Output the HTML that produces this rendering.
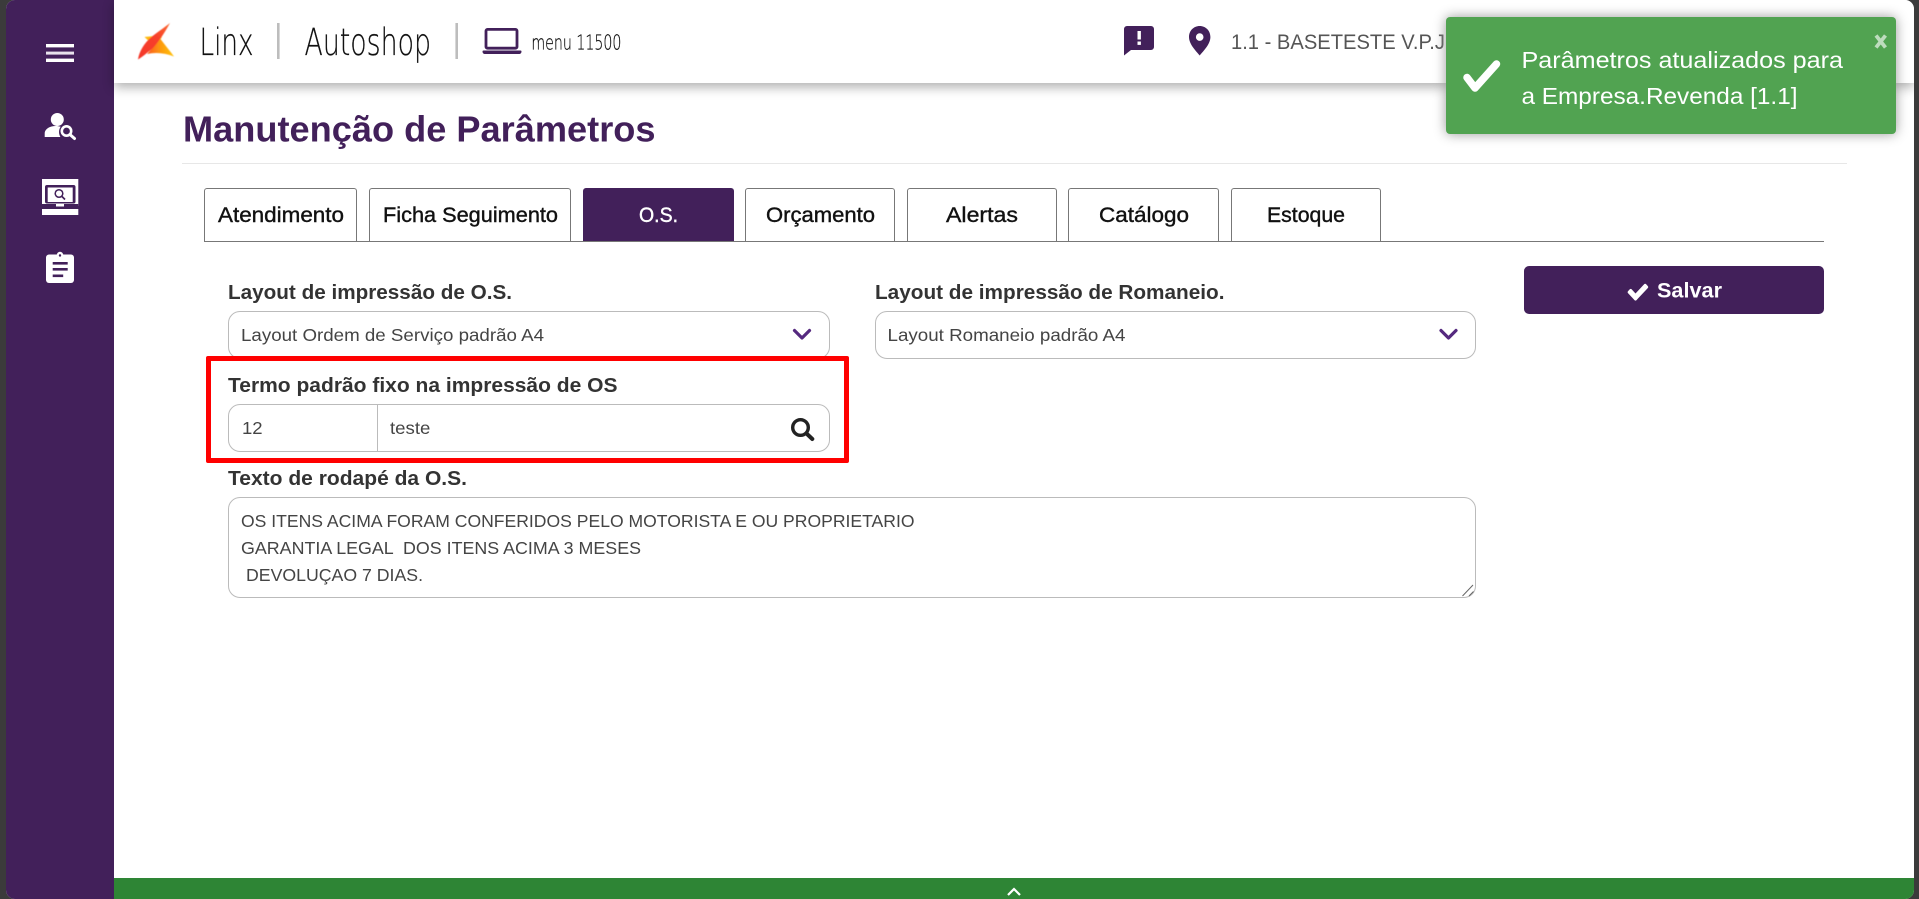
<!DOCTYPE html>
<html lang="pt-BR"><head><meta charset="utf-8"><title>Manutenção de Parâmetros</title>
<style>
html,body{margin:0;padding:0;width:1919px;height:899px;overflow:hidden;background:#3b3b3b;font-family:"Liberation Sans",sans-serif}
div{position:absolute;box-sizing:border-box}
#app{left:6px;top:0;width:1908px;height:899px;background:#fff;border-radius:9px;overflow:hidden}
#side{left:0;top:0;width:108px;height:899px;background:#42205a}
#head{left:108px;top:0;width:1800px;height:83px;background:#fff;box-shadow:0 4px 11px rgba(0,0,0,.32)}
#foot{left:108px;top:878px;width:1800px;height:21px;background:#2e8535}
.hr{left:176px;top:163px;width:1665px;height:1px;background:#e7e7e7}
.tab{top:188px;height:53px;background:#fff;border:1px solid #777;border-bottom:0;border-radius:3px 3px 0 0}
.tab.on{background:#42205a;border-color:#42205a}
.line{left:198px;top:241px;width:1620px;height:1px;background:#777}
.box{background:#fff;border:1px solid #bbb;border-radius:12px}
.btn{left:1518px;top:266px;width:300px;height:48px;background:#42205a;border-radius:5px}
.red{left:200px;top:356px;width:643px;height:107px;border:5px solid #f00;border-radius:2px}
.div{left:371px;top:405px;width:1px;height:47px;background:#bbb}
#toast{left:1446px;top:17px;width:450px;height:117px;background:#51a351;border-radius:4px;box-shadow:0 0 12px #999}
svg{position:absolute;left:0;top:0}
text{font-family:"Liberation Sans",sans-serif}
.lb{font-size:20.500px;font-weight:700;fill:#333}
.tb{font-size:21.500px;fill:#111;stroke:#111;stroke-width:.4px}
.in{font-size:17.500px;fill:#444}
.th{font-family:"DejaVu Sans ExtraLight","DejaVu Sans","Liberation Sans",sans-serif;fill:#111;font-weight:200;stroke:#111;stroke-width:.25px}
</style></head>
<body>
<div id="app">
  <div id="side"></div>
  <div id="foot"></div>
  <div id="head"></div>
  <div class="hr"></div>
  <div class="tab" style="left:198px;width:153px"></div>
  <div class="tab" style="left:363px;width:202px"></div>
  <div class="tab on" style="left:577px;width:151px"></div>
  <div class="tab" style="left:739px;width:150px"></div>
  <div class="tab" style="left:901px;width:150px"></div>
  <div class="tab" style="left:1062px;width:151px"></div>
  <div class="tab" style="left:1225px;width:150px"></div>
  <div class="line"></div>
  <div class="box" style="left:222px;top:311px;width:602px;height:48px"></div>
  <div class="box" style="left:869px;top:311px;width:600.500px;height:48px"></div>
  <div class="box" style="left:222px;top:404px;width:602px;height:48px"></div>
  <div class="div"></div>
  <div class="box" style="left:222px;top:497px;width:1247.500px;height:101px"></div>
  <div class="btn"></div>
  <div class="red"></div>
</div>

<svg width="1919" height="899" viewBox="0 0 1919 899" xmlns="http://www.w3.org/2000/svg">
  <defs>
    <linearGradient id="lg" x1="0" y1="1" x2="1" y2="0">
      <stop offset="0" stop-color="#f4372c"/><stop offset=".6" stop-color="#f8402a"/><stop offset="1" stop-color="#fb6a30"/>
    </linearGradient>
    <linearGradient id="lg2" x1="0" y1="0" x2="1" y2="0">
      <stop offset="0" stop-color="#fb5a1e"/><stop offset=".5" stop-color="#fd9a10"/><stop offset="1" stop-color="#ffc40a"/>
    </linearGradient>
    <filter id="sb" x="-10%" y="-10%" width="120%" height="120%"><feGaussianBlur stdDeviation=".45"/></filter>
  </defs>

  <!-- sidebar icons -->
  <g fill="#fff">
    <rect x="46" y="44" width="28" height="3.400"/><rect x="46" y="51.600" width="28" height="3" fill="#e8e2ec"/><rect x="46" y="58.600" width="28" height="3.400"/>
    <circle cx="57.300" cy="119.500" r="6.500"/>
    <path d="M44.700 137v-3.500c0-4.500 5-7.500 11-7.500 2 0 3.500.3 5 .8-1.800 2.200-2.500 6.500-.3 10.200z"/>
  </g>
  <circle cx="66.500" cy="131" r="4.700" fill="#42205a" stroke="#fff" stroke-width="2.600"/>
  <path d="M70.500 135l4 3.500" stroke="#fff" stroke-width="3" stroke-linecap="round"/>

  <rect x="42" y="179" width="36.300" height="27" fill="#fff"/>
  <rect x="45" y="185" width="30.500" height="18.500" rx="2" fill="#42205a"/>
  <rect x="47.700" y="187.500" width="25" height="14.500" fill="#fff"/>
  <rect x="42" y="204" width="36.300" height="2.500" fill="#42205a"/>
  <rect x="56" y="203.500" width="8" height="3" fill="#fff"/>
  <rect x="42" y="209" width="36.300" height="6" fill="#fff"/>
  <circle cx="59" cy="193.500" r="3.800" fill="none" stroke="#42205a" stroke-width="1.500"/>
  <path d="M62 196.500l3 3" stroke="#42205a" stroke-width="1.700"/>

  <rect x="46" y="254.500" width="28" height="28.500" rx="3" fill="#fff"/>
  <circle cx="60" cy="255" r="3.200" fill="#fff"/><circle cx="60" cy="255.500" r="1.200" fill="#42205a"/>
  <g fill="#42205a"><rect x="52.700" y="262" width="15" height="2.600"/><rect x="52.700" y="268" width="15" height="2.600"/><rect x="52.700" y="274.500" width="10.500" height="2.600"/></g>

  <!-- logo -->
  <g filter="url(#sb)">
    <path d="M144.500 37L154 36L162 37L155 47Z" fill="#ffb90c"/>
    <path d="M147 54L160.500 39C165 45 170 51 174 56.500C165 53 156 52 147 54Z" fill="url(#lg2)"/>
    <path d="M170 23C166 30 161 39 153 48C147 53 142 57 138 59.500C139 52 144 43 152 36.500C159 31 165 27 170 23Z" fill="url(#lg)"/>
  </g>
  <rect x="277" y="23" width="2.600" height="36" fill="#bdbdbd"/>
  <rect x="455.400" y="23" width="2.600" height="36" fill="#bdbdbd"/>
  <text class="th" x="199.500" y="55" font-size="37" textLength="54" lengthAdjust="spacingAndGlyphs">Linx</text>
  <text class="th" x="304.500" y="55" font-size="37" textLength="126.500" lengthAdjust="spacingAndGlyphs">Autoshop</text>
  <rect x="486" y="29.400" width="31" height="18.800" rx="1.500" fill="none" stroke="#42205a" stroke-width="2.800"/>
  <path d="M483.500 50.500h37a1 1 0 0 1 1 1c0 1.500-1 2.500-2.500 2.500h-34c-1.500 0-2.500-1-2.500-2.500a1 1 0 0 1 1-1z" fill="#42205a"/>
  <text class="th" x="531.400" y="49.500" font-size="20" textLength="90" lengthAdjust="spacingAndGlyphs">menu 11500</text>

  <!-- chat & pin -->
  <path d="M1127 26h24a3 3 0 0 1 3 3v18a3 3 0 0 1-3 3h-20l-7 5.500V29a3 3 0 0 1 3-3z" fill="#42205a"/>
  <rect x="1137.500" y="31" width="3.400" height="8.500" fill="#fff"/><rect x="1137.500" y="41.500" width="3.400" height="3.400" fill="#fff"/>
  <path fill-rule="evenodd" d="M1199.700 26c-6 0-10.700 4.700-10.700 11 0 7 6.500 13.500 10.700 18.500 4.200-5 10.700-11.500 10.700-18.500 0-6.300-4.700-11-10.700-11zm0 7.300a3.800 3.800 0 1 1 0 7.600 3.800 3.800 0 0 1 0-7.600z" fill="#42205a"/>
  <text x="1231" y="49" font-size="21" fill="#555" textLength="214" lengthAdjust="spacingAndGlyphs">1.1 - BASETESTE V.P.J</text>

  <!-- title -->
  <text x="183" y="141.500" font-size="36" font-weight="700" fill="#42205a" textLength="472.500" lengthAdjust="spacingAndGlyphs">Manutenção de Parâmetros</text>

  <!-- tabs -->
  <text class="tb" x="218" y="222" textLength="126" lengthAdjust="spacingAndGlyphs">Atendimento</text>
  <text class="tb" x="383" y="222" textLength="175" lengthAdjust="spacingAndGlyphs">Ficha Seguimento</text>
  <text class="tb" x="639" y="222" textLength="39" lengthAdjust="spacingAndGlyphs" style="fill:#fff;stroke:#fff">O.S.</text>
  <text class="tb" x="766" y="222" textLength="109" lengthAdjust="spacingAndGlyphs">Orçamento</text>
  <text class="tb" x="946" y="222" textLength="72" lengthAdjust="spacingAndGlyphs">Alertas</text>
  <text class="tb" x="1099" y="222" textLength="90" lengthAdjust="spacingAndGlyphs">Catálogo</text>
  <text class="tb" x="1267" y="222" textLength="78" lengthAdjust="spacingAndGlyphs">Estoque</text>

  <!-- labels -->
  <text class="lb" x="228" y="299" textLength="284" lengthAdjust="spacingAndGlyphs">Layout de impressão de O.S.</text>
  <text class="lb" x="875" y="299" textLength="349.500" lengthAdjust="spacingAndGlyphs">Layout de impressão de Romaneio.</text>
  <text class="lb" x="228" y="392" textLength="389.500" lengthAdjust="spacingAndGlyphs">Termo padrão fixo na impressão de OS</text>
  <text class="lb" x="228" y="485" textLength="239" lengthAdjust="spacingAndGlyphs">Texto de rodapé da O.S.</text>

  <!-- fields -->
  <text class="in" x="241" y="341" textLength="303" lengthAdjust="spacingAndGlyphs">Layout Ordem de Serviço padrão A4</text>
  <text class="in" x="887.500" y="341" textLength="238" lengthAdjust="spacingAndGlyphs">Layout Romaneio padrão A4</text>
  <path d="M794.500 330.500l7.500 7.500 7.500-7.500" fill="none" stroke="#55297f" stroke-width="3.200" stroke-linecap="round" stroke-linejoin="round"/>
  <path d="M1441 330.500l7.500 7.500 7.500-7.500" fill="none" stroke="#55297f" stroke-width="3.200" stroke-linecap="round" stroke-linejoin="round"/>
  <text class="in" x="242" y="434" textLength="20.600" lengthAdjust="spacingAndGlyphs">12</text>
  <text class="in" x="390" y="434" textLength="40.400" lengthAdjust="spacingAndGlyphs">teste</text>
  <circle cx="800.500" cy="427.500" r="7.800" fill="none" stroke="#222" stroke-width="3.400"/>
  <path d="M806.500 433.500l5.800 5.500" stroke="#222" stroke-width="4" stroke-linecap="round"/>
  <text class="in" x="241" y="527" textLength="673.500" lengthAdjust="spacingAndGlyphs">OS ITENS ACIMA FORAM CONFERIDOS PELO MOTORISTA E OU PROPRIETARIO</text>
  <text class="in" x="241" y="554" textLength="400" lengthAdjust="spacingAndGlyphs" xml:space="preserve">GARANTIA LEGAL  DOS ITENS ACIMA 3 MESES</text>
  <text class="in" x="246" y="581" textLength="177" lengthAdjust="spacingAndGlyphs">DEVOLUÇAO 7 DIAS.</text>
  <path d="M1462.500 596l10.500-11M1469 596l4.500-4.500" stroke="#666" stroke-width="1" fill="none"/>

  <!-- save -->
  <g transform="translate(1626 279) scale(.0133 .0142)"><path fill="#fff" d="M1671 566q0 40-28 68l-724 724-136 136q-28 28-68 28t-68-28l-136-136-362-362q-28-28-28-68t28-68l136-136q28-28 68-28t68 28l294 295 656-657q28-28 68-28t68 28l136 136q28 28 28 68z"/></g>
  <text x="1657" y="297.500" font-size="21" font-weight="700" fill="#fff" textLength="65" lengthAdjust="spacingAndGlyphs">Salvar</text>

  <!-- footer chevron -->
  <path d="M1008 895l6-6 6 6" fill="none" stroke="#fff" stroke-width="2.200"/>
</svg>

<div id="toast">
  <svg width="450" height="117" viewBox="0 0 450 117" xmlns="http://www.w3.org/2000/svg">
    <path d="M21 60.500l8 10.500L50.500 47" fill="none" stroke="#fff" stroke-width="7.500" stroke-linejoin="round" stroke-linecap="round"/>
    <text x="75.500" y="51" font-size="23" fill="#fff" textLength="321.500" lengthAdjust="spacingAndGlyphs">Parâmetros atualizados para</text>
    <text x="75.500" y="87" font-size="23" fill="#fff" textLength="276" lengthAdjust="spacingAndGlyphs">a Empresa.Revenda [1.1]</text>
    <path d="M430 18.500l9.500 12M439.500 18.500l-9.500 12" stroke="#fff" stroke-opacity=".62" stroke-width="3.800"/>
  </svg>
</div>
</body></html>
